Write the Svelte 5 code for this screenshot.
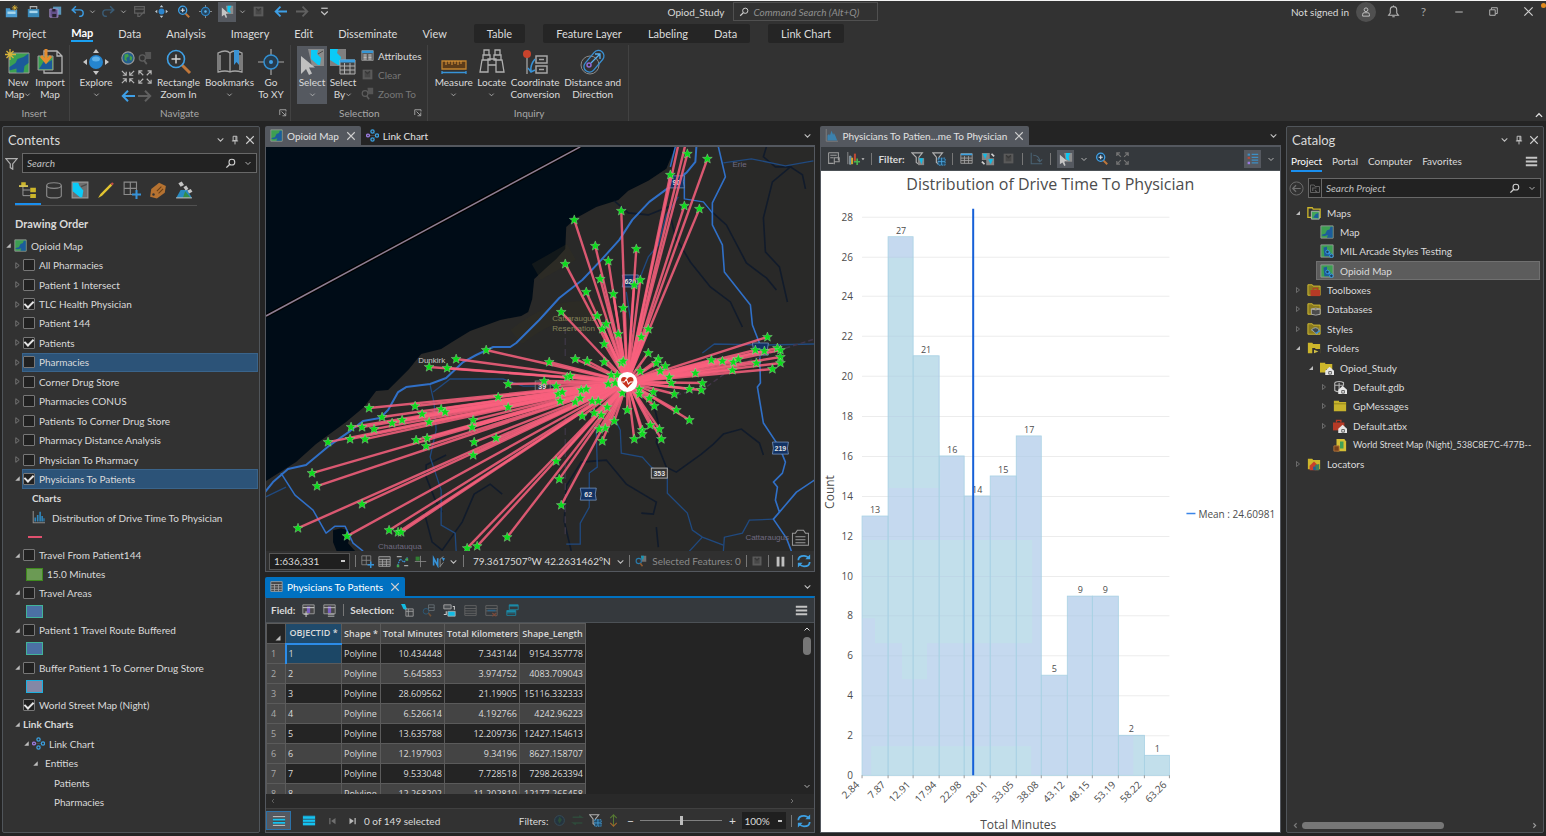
<script lang="ts">
	const icons: Record<string, string> = {
		chev: '<path d="M3 6l5 5 5-5" fill="none" stroke="#c0c0c0" stroke-width="1.800"/>',
		up: '<path d="M3 11l5-5 5 5" fill="none" stroke="#e0e0e0" stroke-width="2"/>',
		left: '<path d="M10 4L6 8l4 4" fill="none" stroke="#7c7c7c" stroke-width="2"/>',
		right: '<path d="M6 4l4 4-4 4" fill="none" stroke="#9c9c9c" stroke-width="2"/>',
		caret: '<path d="M4 6h8l-4 5z" fill="#c8c8c8"/>',
		close: '<path d="M2 2l12 12M14 2L2 14" stroke="#cfcfcf" stroke-width="1.700"/>',
		pin: '<path d="M5 2h6v7H5zM3 9.500h10M8 10v5M9.500 2v7" fill="none" stroke="#c8c8c8" stroke-width="1.500"/>',
		search: '<circle cx="10" cy="6" r="4.200" fill="none" stroke="#d0d0d0" stroke-width="1.600"/><path d="M7 9l-5 5" stroke="#d0d0d0" stroke-width="2"/>',
		menu: '<path d="M1 3.500h14M1 8h14M1 12.500h14" stroke="#c4c4c4" stroke-width="2.400"/>',
		funnel: '<path d="M1 2h14L9.500 8.500V15l-3-2V8.500z" fill="none" stroke="#b0b0b0" stroke-width="1.500"/>',
		open: '<path d="M12 4v8H4z" fill="#bdbdbd"/>',
		shut: '<path d="M5 3v10l6-5z" fill="none" stroke="#8a8a8a" stroke-width="1.300"/>',
		map: '<path d="M1 1h14v14H1z" fill="#3d9f52" stroke="#9a9a9a"/><path d="M2 11l4-1 2-4 3-1 1-3h2.500v12.500H8l1-3-4 1-3-.5z" fill="#1c5c9c"/>',
		mapLink: '<path d="M1 1h14v14H1z" fill="#3d9f52" stroke="#9a9a9a"/><path d="M4 4l4-1v5l4 1v5H5z" fill="#1c5c9c"/><path d="M8 8l3 3m1 1l2 2" stroke="#39a0e8" stroke-width="3"/><circle cx="8.500" cy="9" r="2" fill="#1c3e60" stroke="#39a0e8"/><circle cx="13" cy="13.500" r="2" fill="#1c3e60" stroke="#39a0e8"/>',
		link: '<path d="M3 8h10M8 3l5 5-5 5" stroke="#4b4b4b" fill="none"/><g fill="#303030" stroke="#3aa0e0" stroke-width="1.600"><circle cx="8" cy="3" r="2"/><circle cx="13.500" cy="8" r="2"/><circle cx="8" cy="13" r="2"/><circle cx="2.500" cy="8" r="1.800" stroke="#9a7be0"/></g>',
		bars: '<path d="M1.500 0v14.500H16" fill="none" stroke="#8b8b8b" stroke-width="1.300"/><path d="M3 13V8h2v5zM6 13V5h2v8zM9 13V1h2v12zM11.500 13V6h2v7zM14 13V9h1.500v4z" fill="#2f85ba"/>',
		hist: '<path d="M1.500 0v15H16" fill="none" stroke="#858585"/><path d="M3 14V8l2-2 1 2 2-6 2 5 1-2 2 4 2 5z" fill="#3b81ad"/>',
		newProj: '<path d="M1 4h5l1 2h8v9H1z" fill="#4a9bd0"/><path d="M3 8h10v3H3z" fill="#a9d7ed"/><path d="M12 0v7M8.500 3.500h7M9.500 1l5 5M14.500 1l-5 5" stroke="#e0b83a"/>',
		openProj: '<path d="M1 5h14v10H1z" fill="#3989b8"/><path d="M4 5V2h8v3" fill="none" stroke="#b4b4b4" stroke-width="1.300"/><path d="M3 7h10v3H3z" fill="#a9d7ed"/>',
		saveProj: '<path d="M5 2h10v10H5z" fill="#5a97bb"/><path d="M1 5h10v10H1z" fill="#635089" stroke="#ab94cf"/><path d="M4 5h4v3H4zM4 11h5v4H4z" fill="#282331"/>',
		undo: '<path d="M2 6h9q4 0 4 4t-5 4M6 1.500L1.500 6 6 10" fill="none" stroke="#3c9be0" stroke-width="1.800"/>',
		redo: '<path d="M14 6H5q-4 0-4 4t5 4M10 1.500L14.500 6 10 10" fill="none" stroke="#3a5b74" stroke-width="1.800"/>',
		editDim: '<path d="M2 2h12v8H2zM2 5h12M6 10v4h3M9 13l5-5" fill="none" stroke="#606060" stroke-width="1.500"/>',
		explore: '<circle cx="8" cy="8" r="3.600" fill="#2c86cf"/><path d="M8 0l2.200 2.800H5.800zM8 16l2.200-2.800H5.800zM0 8l2.800-2.200v4.400zM16 8l-2.800-2.200v4.400z" fill="#b9c6cf"/>',
		zoomIn: '<path d="M10 10l5 5" stroke="#c0773a" stroke-width="2.400"/><circle cx="7" cy="6.500" r="5" fill="#203a50" stroke="#3fa0e5" stroke-width="1.600"/><path d="M4.500 6.500h5M7 4v5" stroke="#e0e0e0" stroke-width="1.400"/>',
		xy: '<path d="M8 0v16M0 8h16" stroke="#a0a0a0"/><circle cx="8" cy="8" r="5" fill="#27455e" stroke="#2f86c5" stroke-width="1.500"/><circle cx="8" cy="8" r="1.500" fill="#5db6f0"/>',
		select: '<path d="M6 1h9v10H8z" fill="#8d8d8d"/><path d="M8 1h5l-2 4 1 5-4-2z" fill="#0bc8f4"/><path d="M1 3v11l3-2 2 4 1.500-1L6 11l3-1z" fill="#c4c4c4"/>',
		clear: '<path d="M2 2h12v12H2z" fill="#5a5a5a"/><path d="M4.500 4.500h7v7h-7z" fill="#474747"/><path d="M5 4l3 3 3-3" fill="none" stroke="#383838" stroke-width="1.500"/>',
		back: '<path d="M16 8H2M8 2L2 8l6 6" fill="none" stroke="#3e9fe6" stroke-width="2.200"/>',
		fwd: '<path d="M0 8h14M8 2l6 6-6 6" fill="none" stroke="#606060" stroke-width="2.200"/>',
		more: '<path d="M4 4h8" stroke="#c8c8c8" stroke-width="1.500"/><path d="M4 8l4 4 4-4" fill="none" stroke="#c8c8c8" stroke-width="1.500"/>',
		bell: '<path d="M2 12.500h12l-2-2.500V6q0-4-4-4T4 6v4zM6.500 14.500h3M8 .5V2" fill="none" stroke="#b8b8b8" stroke-width="1.300"/>',
		user: '<circle cx="8" cy="5" r="2.500" fill="none" stroke="#c0c0c0" stroke-width="1.300"/><path d="M3.500 13.500V11q0-2 2-2h5q2 0 2 2v2.500z" fill="none" stroke="#c0c0c0" stroke-width="1.300"/>',
		min: '<path d="M3 8h10" stroke="#c0c0c0" stroke-width="1.300"/>',
		restore: '<path d="M2.500 5.500h8v8h-8zM5 5V2.500h8.500V11H11" fill="none" stroke="#c0c0c0" stroke-width="1.300"/>',
		globe: '<circle cx="8" cy="8" r="7" fill="#235e8d" stroke="#9b9b9b" stroke-width="1.300"/><path d="M4 4l4-1 1 3-3 2 1 4-3-2zM10 5l3 2-1 4-2-1z" fill="#43a047"/>',
		zoomSel: '<path d="M8 1h7v8H9z" fill="#555"/><circle cx="5" cy="8" r="3.500" fill="none" stroke="#5d5d5d" stroke-width="1.500"/><path d="M7 11l3 4" stroke="#5d5d5d" stroke-width="2"/>',
		zoomSelB: '<path d="M8 1h7v8H9z" fill="#717171"/><path d="M8 1h4l-1 5H9z" fill="#1397b6"/><circle cx="5" cy="8" r="3.500" fill="none" stroke="#297aab" stroke-width="1.500"/><path d="M7 11l3 4" stroke="#8d5a30" stroke-width="2"/>',
		inArrows: '<path d="M1 1l5 5M6 2v4H2M15 1l-5 5M10 2v4h4M1 15l5-5M2 10h4v4M15 15l-5-5M14 10h-4v4" fill="none" stroke="#b5b5b5" stroke-width="1.300"/>',
		outArrows: '<path d="M6 6L1 1M1 5V1h4M10 6l5-5M11 1h4v4M6 10l-5 5M1 11v4h4M10 10l5 5M11 15h4v-4" fill="none" stroke="#b5b5b5" stroke-width="1.300"/>',
		full: '<path d="M6 6L1 1M1 5V1h4M10 6l5-5M11 1h4v4M6 10l-5 5M1 11v4h4M10 10l5 5M11 15h4v-4" fill="none" stroke="#747474" stroke-width="1.500"/>',
		attrs: '<path d="M1 2h14v12H1z" fill="#5a5a5a" stroke="#9b9b9b"/><path d="M1 2h14v3H1z" fill="#3596d5"/><path d="M3 7.500h4M3 10h4M9 7.500h4M9 10h4M3 12.300h4M9 12.300h4" stroke="#d6d6d6" stroke-width="1.300"/>',
		launch: '<path d="M1.500 12V1.500H14V5M5 5l8 8M13.500 7v6.500H7" fill="none" stroke="#b0b0b0" stroke-width="1.700"/>',
		order: '<path d="M3.500 5v8H10M3.500 8H10" stroke="#a0a0a0" fill="none" stroke-width=".8"/><path d="M2 1h4v3H2zM10 6h5v4h-5zM10 11.500h5V15h-5z" fill="#cdb62b"/><path d="M0 4.500h8" stroke="#f0dc5a" stroke-width="1.400"/>',
		source: '<path d="M1.500 4v9q0 2 6.500 2t6.500-2V4" fill="none" stroke="#8a8a8a"/><ellipse cx="8" cy="4" rx="6.500" ry="2.500" fill="none" stroke="#8a8a8a"/>',
		layer: '<path d="M1 1h14v14H1z" fill="#6f6f6f" stroke="#9a9a9a"/><path d="M1.500 1.500h5l1 3 3.500 4-1 6H8L1.500 9z" fill="#0bcaf7"/><path d="M9 5l5-2" stroke="#4a4a4a"/>',
		pencil: '<path d="M1 15l2-3.500L12 2.500l1.500 1.500-9 9z" fill="#e3c531"/><path d="M12 2.500l1.500-1.500L15 2.500 13.500 4z" fill="#c25048"/>',
		grid: '<path d="M1 1h11v11H1zM6.500 1v11M1 6.500h11" fill="none" stroke="#8b8b8b"/><path d="M12 8v8M8 12h8" stroke="#3793d8" stroke-width="1.800"/>',
		tag: '<path d="M1 14l1-7 7-5.500 6 3-1 6-7 5z" fill="#b57231"/><circle cx="4" cy="12" r="1.100" fill="#333"/><path d="M7 9l4-4M8.500 11l4-4" stroke="#6b4015"/>',
		imagery: '<path d="M1 15l4-7h6l4 7z" fill="#278ac0"/><path d="M7 15l2-6 5 6z" fill="#348f48"/><path d="M3 2l3-1.500 2 3-3 1.500zM7.500 5.500l2.500-1.500 2 3-2.500 1.500zM11 8.500l3-1.500 1.500 2.500-3 1.500z" fill="#c4c4c4"/><path d="M1 15h14" stroke="#b8b8b8"/>',
		table: '<path d="M1 2h14v12H1z" fill="#444" stroke="#a5a5a5"/><path d="M1 5.500h14M1 8.500h14M1 11.500h14M5.500 5v9M10.500 5v9" stroke="#a5a5a5"/>',
		tableBlue: '<path d="M1 2h14v12H1z" fill="#444" stroke="#a5a5a5"/><path d="M1 3h14" stroke="#3aa0e0" stroke-width="2"/><path d="M1 7.500h14M1 10.500h14M5.500 5v9M10.500 5v9" stroke="#a5a5a5"/>',
		tableDim: '<path d="M1 2h14v12H1zM1 5.500h14M1 8.500h14M1 11.500h14" fill="none" stroke="#696969"/>',
		tableRed: '<path d="M1 2h14v12H1zM1 5.500h14M1 8.500h14" fill="none" stroke="#696969"/><path d="M9 11l5 4M14 11l-5 4" stroke="#7b4a3a" stroke-width="1.500"/><path d="M3 8h10" stroke="#2b6284" stroke-width="2"/>',
		fieldAdd: '<path d="M1 1h14v11H1z" fill="#494949" stroke="#a5a5a5"/><path d="M6 3h4v8H6z" fill="#7b5fc4"/><path d="M1 4.500h14M5 9v7M2 12.500h6" stroke="#cfcfcf" stroke-width="1.200"/>',
		fieldCalc: '<path d="M1 1h14v11H1z" fill="#494949" stroke="#a5a5a5"/><path d="M6 3h4v8H6z" fill="#7b5fc4"/><path d="M1 4.500h14M6 12.500h8M6 15h8" stroke="#cfcfcf"/>',
		selAttr: '<path d="M0 0h5l3 8-5-2z" fill="#12bce4"/><path d="M6 6h9v9H6zM6 9h9M9 6v9" fill="#3d4043" stroke="#a5a5a5"/>',
		selZoom: '<path d="M8 1h7v7H8zM8 4.500h7" fill="none" stroke="#697176"/><circle cx="5" cy="9" r="3.500" fill="none" stroke="#2b5f80"/><path d="M8 11l3 4" stroke="#725036" stroke-width="2"/>',
		swap: '<path d="M1 1h9v5H1z" fill="#4b4f53" stroke="#b0b0b0"/><path d="M6 9h9v6H6z" fill="#12bce4" stroke="#b0b0b0"/><path d="M12 3h2v4M4 9v4H1" fill="none" stroke="#c8c8c8" stroke-width="1.300"/>',
		stack: '<path d="M4 1h11v6H4z" fill="none" stroke="#1b8aa8"/><path d="M1 8h11v6H1zM1 11h11" fill="none" stroke="#1b8aa8"/><path d="M4 2h11M1 9h11" stroke="#1b8aa8" stroke-width="2"/>',
		allRows: '<path d="M1 2h14v12H1z" fill="#44494d"/><path d="M1 3h14M1 13h14" stroke="#b8b8b8" stroke-width="1.500"/><path d="M1 6.500h14M1 10h14" stroke="#15c2f0" stroke-width="2"/>',
		selRows: '<path d="M1 2h14v11H1z" fill="#15c2f0"/><path d="M1 2h14M1 6h14M1 9.500h14" stroke="#2a566c"/>',
		first: '<path d="M3 3v10" stroke="#6f6f6f" stroke-width="2"/><path d="M12 3v10L5 8z" fill="#6f6f6f"/>',
		last: '<path d="M13 3v10" stroke="#b9b9b9" stroke-width="2"/><path d="M4 3v10l7-5z" fill="#b9b9b9"/>',
		globeDim: '<circle cx="8" cy="8" r="6" fill="#24333e" stroke="#37505f"/><path d="M8 3l3 4-3 5-2-4z" fill="#2c4c38"/>',
		swapDim: '<path d="M2 4h11l-3-2M14 11H3l3 2" fill="none" stroke="#2f4a3b" stroke-width="2"/>',
		funnelGrid: '<path d="M1 1h11L8 6v8l-3-2V6z" fill="none" stroke="#b0b0b0" stroke-width="1.300"/><path d="M7 7h8v8H7z" fill="#1f4967" stroke="#4aa3dc" stroke-dasharray="2 1"/><path d="M11 7v8M7 11h8" stroke="#4aa3dc"/>',
		funnelSel: '<path d="M1 1h12L9 6v8l-3-2V6z" fill="none" stroke="#b0b0b0" stroke-width="1.300"/><path d="M8 7h7v8H8z" fill="#888"/><path d="M9 7h5l-2 7z" fill="#13b9e2"/>',
		sortV: '<path d="M8 1v14M4 5l4-4 4 4" fill="none" stroke="#567a33" stroke-width="1.300"/><path d="M4 11l4 4 4-4" fill="none" stroke="#a5662b" stroke-width="1.300"/>',
		refresh: '<path d="M1.500 7q0-5 6.500-5 3.500 0 5.500 3M14.500 9q0 5-6.500 5-3.500 0-5.500-3" fill="none" stroke="#3d9fe2" stroke-width="2"/><path d="M15 .5V6H9.500zM1 15.500V10h5.500z" fill="#3d9fe2"/>',
		pause: '<path d="M5 2v12M11 2v12" stroke="#c0c0c0" stroke-width="3.500"/>',
		sketch: '<path d="M2 13l3-8 5 4 4-6" fill="none" stroke="#3793d8" stroke-dasharray="2 1" stroke-width="1.400"/><path d="M1 2h6M10 13h5" stroke="#a5a5a5" stroke-width="1.500"/><path d="M1 12h3v3H1zM12 4h3v3h-3z" fill="#46a550"/>',
		cross: '<path d="M8 1v14M1 8h14" stroke="#8a8a8a"/><path d="M2 2h5v5H2z" fill="#317d32"/>',
		north: '<path d="M2 13V4l5 9V4" fill="none" stroke="#3793d8" stroke-width="2"/><path d="M10 15V5l4-3M10 14l4-5" fill="none" stroke="#9d9d9d"/><path d="M12 3l4 1-2 4z" fill="#3793d8"/>',
		props: '<path d="M2 1h12v9M2 1v13h6M4 4h8M4 7h4M9 15V7h6v5H9" fill="none" stroke="#9e9e9e" stroke-width="1.300"/>',
		chartAdd: '<path d="M1 0v15M3 15V5h2v10z" stroke="#9b9b9b" fill="#2f85ba"/><path d="M5 7h2.500v8H5z" fill="#d2a62f"/><path d="M8.500 2H11v9H8.500z" fill="#c24b35"/><path d="M12.500 8v8M8.500 12h8" stroke="#49b34f" stroke-width="2"/>',
		swapSel: '<path d="M1 1h9v8H1zM6 7h9v8H6z" fill="#858585"/><path d="M2 2h5l-2 6zM8 8h6l-3 6z" fill="#13b9e2"/><path d="M12 2l3 3M1 11l3 3" stroke="#d0d0d0" stroke-width="2"/>',
		axis: '<path d="M1.500 1v13.500H15M4 4q7 0 8 7M9 9l3 3 3-3" fill="none" stroke="#4a6374" stroke-width="1.300"/>',
		legend: '<path d="M7 3h8M7 6.500h8M7 10h8M7 13.500h8" stroke="#3d8fc4" stroke-width="1.500"/><path d="M2 2h3v2.500H2z" fill="#3d8fc4"/><path d="M2 6h3v2.500H2z" fill="#b5483a"/><path d="M2 12h3v3H2z" fill="#9a7be0"/>',
		backCircle: '<circle cx="8" cy="8" r="7" fill="none" stroke="#707070"/><path d="M12.500 8H4M7.500 4.500L4 8l3.500 3.500" fill="none" stroke="#707070" stroke-width="1.300"/>',
		folderUp: '<path d="M2 4h5l1 2h6v8H2z" fill="none" stroke="#636363" stroke-width="1.300"/><path d="M5 12V8h5M8 11l3 3" stroke="#636363" fill="none" stroke-width="1.500"/>',
		fMaps: '<path d="M1 13V2h5l1 1.500h8V13z" fill="none" stroke="#cdb62b" stroke-width="1.500"/><path d="M5 6h9v9H5z" fill="#43a55a" stroke="#b8b8b8"/><path d="M7 13l3-4 3-1v6z" fill="#1c5c9c"/>',
		fTool: '<path d="M1 14V2h5l1 1.500h8V14z" fill="#8a7a1e" stroke="#d8c233"/><path d="M4 8h11v7H4z" fill="#b63a26"/><path d="M7 8V6h5v2" fill="none" stroke="#b63a26" stroke-width="1.300"/>',
		fDb: '<path d="M1 14V2h5l1 1.500h8V14z" fill="#8a7a1e" stroke="#d8c233"/><path d="M5 8v6q5 2 10 0V8q-5 2-10 0q5-2 10 0" fill="#4c4c4c" stroke="#b0b0b0"/>',
		fStyle: '<path d="M1 14V2h5l1 1.500h8V14z" fill="#8a7a1e" stroke="#d8c233"/><path d="M5 9q5-5 9 0l-3 5-3-3z" fill="#3d4a52" stroke="#a9b3b9"/><path d="M10 13l5-3" stroke="#3793d8" stroke-width="1.500"/>',
		fFolder: '<path d="M1 14V2h5l1 1.500h8V14z" fill="#cdb62b"/><path d="M6 15V8h3l1 1h5v6z" fill="#323232"/><path d="M8 10v4l5-2z" fill="#d0c04a"/>',
		folder: '<path d="M1 14V2h6v1.500h8V14z" fill="#c7b32c"/><path d="M1 5.500h14" stroke="#8f811c"/>',
		home: '<path d="M0 13V2h6v1.500h8V9H7v4z" fill="#cdb62b"/><path d="M6 11l5-4.500 5 4.500v5H6z" fill="#e6e6e6"/><path d="M10 15v-3h3v3z" fill="none" stroke="#555"/>',
		gdb: '<path d="M2 3v9q3 2 5 1V3M2 3q5-2.500 10 0v3H2" fill="none" stroke="#b5b5b5" stroke-width="1.300"/><path d="M6 11l5-4.500 5 4.500v5H6z" fill="#e6e6e6"/><path d="M10 15v-3h3v3z" fill="none" stroke="#555"/>',
		atbx: '<path d="M0 4h13v9H0z" fill="#b63a26"/><path d="M4 4V1.500h5V4" fill="none" stroke="#b63a26" stroke-width="1.500"/><path d="M6 11l5-4.500 5 4.500v5H6z" fill="#e6e6e6"/><path d="M10 15v-3h3v3z" fill="none" stroke="#555"/>',
		doc: '<path d="M4 1h9l2 3v11H4z" fill="#d5bf35"/><path d="M8 4h4v8H8z" fill="#3f9f58"/><path d="M1 9h6v6H1z" fill="#77401c" stroke="#b5743a"/>',
		fLoc: '<path d="M1 14V2h5l1 1.500h8V14z" fill="#cdb62b"/><path d="M3 10l5-5 5 5v5H3z" fill="#c8402c"/><path d="M9 9l5-1v7H9z" fill="#3b8060"/><path d="M7 15v-4h3v4" fill="#245f92"/>'
	};

	// ribbon icons, drawn on a 26 unit grid
	const big: Record<string, string> = {
		newMap: '<path d="M4 4h20v20H4z" fill="#3aa052" stroke="#9b9b9b"/><path d="M4.500 18l6-4 2-4 6-2 5-3.500V14l-4 3-1 6.500h-7v-4l-7 2z" fill="#1b5a9a"/><path d="M5 0v11M0 5.500h11M1.500 2l7 7M8.500 2l-7 7" stroke="#d8b43a" stroke-width="1.300"/>',
		importMap: '<path d="M7 2h13l5 5v17H7zM20 2v5h5" fill="none" stroke="#b4b4b4" stroke-width="1.300"/><path d="M1 7h15v14H1z" fill="#3aa052" stroke="#9b9b9b"/><path d="M2 20l5-8 3 2 5-3v9z" fill="#1b5a9a"/><path d="M9 0v12M4 7l5 6 5-6" fill="none" stroke="#e58c2e" stroke-width="3"/>',
		explore: '<circle cx="13" cy="13" r="7" fill="#2585cf"/><ellipse cx="13" cy="10" rx="4" ry="2.500" fill="#5eb0e8"/><path d="M13 0l3 4h-6zM13 26l3-4h-6zM0 13l4-3v6zM26 13l-4-3v6z" fill="#c6c6c6"/>',
		zoomIn: '<path d="M16 16l8 8" stroke="#c0773a" stroke-width="3"/><circle cx="10" cy="10" r="8.500" fill="none" stroke="#3fa0e5" stroke-width="1.600"/><path d="M5.500 10h9M10 5.500v9" stroke="#d8d8d8" stroke-width="1.400"/>',
		book: '<path d="M1 23V4q8-4 12 0 4-4 12 0v19q-8-2-12 0-4-2-12 0zM13 4v19M3 21V6M23 21V6" fill="none" stroke="#a5a5a5" stroke-width="1.300"/><path d="M17 1h5v15l-2.500-3-2.500 3z" fill="#3b93d4"/>',
		xy: '<path d="M13 0v26M0 13h26" stroke="#a5a5a5" stroke-width="1.200"/><circle cx="13" cy="13" r="7" fill="#263c4e" stroke="#3390d2" stroke-width="1.500"/><circle cx="13" cy="13" r="2" fill="#3fa0e5"/>',
		select: '<path d="M9 0h16v17H13z" fill="#8b8b8b"/><path d="M12 1h7l-1 4 4 4-1 7h-2l-7-6z" fill="#0bcaf7"/><path d="M19 5l5-3" stroke="#4a4a4a"/><path d="M2 7v18l5-5 3 6 3-1.500-3-6h6z" fill="#c0c0c0"/>',
		selectBy: '<path d="M0 0h16v17H0z" fill="#808080"/><path d="M0 0h8l-1 4 4 4-1 8H8L0 11z" fill="#0bcaf7"/><path d="M10 11h15v14H10z" fill="#444" stroke="#b0b0b0"/><path d="M10 12h15" stroke="#3aa0e0" stroke-width="3"/><path d="M10 17h15M10 21h15M14.500 14v11M20 14v11" stroke="#b0b0b0"/>',
		measure: '<path d="M1 12h24v8H1z" fill="#5c3c1a" stroke="#c0822f" stroke-width="1.300"/><path d="M5 12v4M8 12v3M11 12v4M14 12v3M17 12v4M20 12v3" stroke="#e0983a"/><path d="M1 23.500h24M1 22v3M25 22v3" stroke="#3793d8" stroke-width="1.300"/>',
		locate: '<path d="M5 1h5v5H5zM16 1h5v5h-5zM4 6h7v5H4zM15 6h7v5h-7zM3 11l-2 12h8V11zM17 11v12h8l-2-12zM9 10h8v6H9z" fill="none" stroke="#b0b0b0" stroke-width="1.300"/>',
		coord: '<path d="M5 5v20" stroke="#a5a5a5" stroke-width="1.300"/><circle cx="5" cy="5" r="4" fill="#c9432c"/><path d="M14 7h11v7H14zM14 17h11v7H14zM17 10.500h5M17 20.500h5" fill="none" stroke="#a5a5a5" stroke-width="1.500"/><path d="M13 10q-5 6-4 12M6 19l3 4 4-2" fill="none" stroke="#3793d8" stroke-width="1.500"/>',
		distance: '<circle cx="10" cy="16" r="9" fill="none" stroke="#8a8a8a"/><rect x="2" y="7" width="25" height="11" rx="5.500" transform="rotate(-50 14 13)" fill="none" stroke="#3a8fd0" stroke-width="1.300"/><circle cx="9" cy="16" r="2" fill="none" stroke="#8d6cd8" stroke-width="1.500"/><path d="M11 14l9-9M15 5h5v5" fill="none" stroke="#57b0ee" stroke-width="1.300"/>'
	};

	const quick = ['newProj', 'openProj', 'saveProj', 'undo', '-', 'redo', '-', 'editDim', 'explore', 'zoomIn', 'xy', '*select', '-', 'clear', 'back', 'fwd', 'more'];
	const tabs = ['Project', 'Map', 'Data', 'Analysis', 'Imagery', 'Edit', 'Disseminate', 'View'];
	const contextTabs = [['Table'], ['Feature Layer', 'Labeling', 'Data'], ['Link Chart']];

	let layers = $state([
		{ pad: 0, open: true, icon: 'map', label: 'Opioid Map' },
		...['All Pharmacies', 'Patient 1 Intersect', 'TLC Health Physician', 'Patient 144', 'Patients', 'Pharmacies', 'Corner Drug Store', 'Pharmacies CONUS', 'Patients To Corner Drug Store', 'Pharmacy Distance Analysis', 'Physician To Pharmacy'].map((label) => ({
			pad: 9, open: false, label,
			checked: label === 'TLC Health Physician' || label === 'Patients',
			selected: label === 'Pharmacies'
		})),
		{ pad: 9, open: true, checked: true, selected: true, label: 'Physicians To Patients' },
		{ pad: 18, bold: true, label: 'Charts' },
		{ pad: 18, icon: 'bars', wide: true, label: 'Distribution of Drive Time To Physician' },
		{ pad: 14, legend: 'line' },
		{ pad: 9, open: true, checked: false, label: 'Travel From Patient144' },
		{ pad: 12, legend: 'green', label: '15.0 Minutes' },
		{ pad: 9, open: true, checked: false, label: 'Travel Areas' },
		{ pad: 12, legend: 'blue' },
		{ pad: 9, open: true, checked: false, label: 'Patient 1 Travel Route Buffered' },
		{ pad: 12, legend: 'blue' },
		{ pad: 9, open: true, checked: false, label: 'Buffer Patient 1 To Corner Drug Store' },
		{ pad: 12, legend: 'grey' },
		{ pad: 9, checked: true, label: 'World Street Map (Night)' },
		{ pad: 9, open: true, bold: true, label: 'Link Charts' },
		{ pad: 18, open: true, icon: 'link', label: 'Link Chart' },
		{ pad: 27, open: true, deep: true, label: 'Entities' },
		{ pad: 40, label: 'Patients' },
		{ pad: 40, label: 'Pharmacies' }
	] as any[]);

	const catalog = [
		{ pad: 6, open: true, icon: 'fMaps', label: 'Maps' },
		{ pad: 19, icon: 'map', label: 'Map' },
		{ pad: 19, icon: 'mapLink', label: 'MIL Arcade Styles Testing' },
		{ pad: 19, icon: 'mapLink', label: 'Opioid Map', selected: true },
		{ pad: 6, open: false, icon: 'fTool', label: 'Toolboxes' },
		{ pad: 6, open: false, icon: 'fDb', label: 'Databases' },
		{ pad: 6, open: false, icon: 'fStyle', label: 'Styles' },
		{ pad: 6, open: true, icon: 'fFolder', label: 'Folders' },
		{ pad: 19, open: true, icon: 'home', label: 'Opiod_Study' },
		{ pad: 32, open: false, icon: 'gdb', label: 'Default.gdb' },
		{ pad: 32, open: false, icon: 'folder', label: 'GpMessages' },
		{ pad: 32, open: false, icon: 'atbx', label: 'Default.atbx' },
		{ pad: 32, icon: 'doc', label: 'World Street Map (Night)_538C8E7C-477B--', long: true },
		{ pad: 6, open: false, icon: 'fLoc', label: 'Locators' }
	] as any[];

	const rows = [
		['10.434448', '7.343144', '9154.357778'],
		['5.645853', '3.974752', '4083.709043'],
		['28.609562', '21.19905', '15116.332333'],
		['6.526614', '4.192766', '4242.96223'],
		['13.635788', '12.209736', '12427.154613'],
		['12.197903', '9.34196', '8627.158707'],
		['9.533048', '7.728518', '7298.263394'],
		['12.268202', '11.202819', '12177.265458']
	];

	// patient locations on the map canvas
	const hub = [361, 235];
	const patients = [[421,7],[441,12],[404,28],[418,59],[433,62],[355,64],[308,73],[329,99],[370,102],[299,117],[342,114],[334,132],[374,133],[368,138],[320,145],[347,147],[357,161],[295,165],[331,169],[340,177],[336,182],[352,187],[382,182],[375,190],[338,197],[382,206],[501,190],[511,201],[514,203],[489,203],[498,204],
		[283,215],[309,212],[321,214],[338,215],[355,216],[357,214],[392,212],[390,216],[399,219],[394,224],[403,230],[405,236],[408,247],[429,226],[445,213],[456,214],[467,215],[472,212],[490,216],[514,210],[514,216],[506,222],[466,223],[436,236],[435,243],[423,242],[374,224],[373,242],[373,247],[387,245],[383,251],[388,259],[410,263],[423,273],[384,278],[393,282],[376,283],[376,287],[368,292],[395,292],[361,263],[348,274],[339,281],[333,282],[336,294],[335,268],[328,266],[341,260],[316,269],[326,254],[332,254],[309,255],[314,251],[294,254],[292,247],[296,245],[290,239],[278,234],[301,230],[304,229],[315,243],[320,242],[345,228],[351,228],[342,237],[349,236],[356,246],[290,314],[293,332],[295,358],
		[220,203],[190,212],[163,220],[181,221],[242,237],[232,250],[242,260],[149,259],[156,267],[175,262],[179,265],[103,261],[116,270],[126,276],[136,273],[163,275],[85,280],[96,280],[108,282],[84,292],[99,292],[62,295],[150,293],[161,291],[160,299],[207,273],[206,280],[208,295],[230,291],[207,308],[46,326],[51,339],[96,357],[32,381],[81,389],[123,383],[132,385],[135,385],[201,401],[211,399],[241,390]];
	const offMap = [[412, -2], [419, -2]];
	const shields = [{ x: 410, y: 35, t: '90' }, { x: 364, y: 134, t: '620' }, { x: 514, y: 301, t: '219' }, { x: 322, y: 347, t: '62' }, { x: 494, y: 202, t: '' }];

	// histogram
	const counts = [13, 27, 21, 16, 14, 15, 17, 5, 9, 9, 2, 1];
	const edges = ['2.84', '7.87', '12.91', '17.94', '22.98', '28.01', '33.05', '38.08', '43.12', '48.15', '53.19', '58.22', '63.26'];
	const ticks = Array.from({ length: 15 }, (_, i) => i * 2);
	const bx = (i: number) => Math.round(41 + i * 25.6);
	const by = (n: number) => Math.round(603 - n * 19.94);

	let zoom = $state(50);
</script>

{#snippet icon(name, size = 14)}
	<svg class="icon" width={size} height={size} viewBox="0 0 16 16" aria-hidden="true">{@html icons[name]}</svg>
{/snippet}

{#snippet large(name, lines, cls = '', drop = false)}
	<button class="large {cls}">
		<svg width="26" height="26" viewBox="0 0 26 26" aria-hidden="true">{@html big[name]}</svg>
		<span>{lines[0]}</span>
		<span class="second">{lines[1] ?? ''}{#if drop}{@render icon('chev', 7)}{/if}</span>
	</button>
{/snippet}

{#snippet paneTitle(title)}
	<header class="pane-title">
		<h2>{title}</h2>
		<button aria-label="Options">{@render icon('chev', 9)}</button>
		<button aria-label="Pin">{@render icon('pin', 10)}</button>
		<button aria-label="Close">{@render icon('close', 10)}</button>
	</header>
{/snippet}

<div class="app">
	<div class="titlebar">
		<div class="quick">
			{#each quick as q}
				{#if q === '-'}
					<button class="drop" aria-label="More">{@render icon('chev', 7)}</button>
				{:else}
					<button class:on={q[0] === '*'} aria-label={q.replace('*', '')}>{@render icon(q.replace('*', ''), 13)}</button>
				{/if}
			{/each}
		</div>
		<span class="project">Opiod_Study</span>
		<label class="command">
			{@render icon('search', 10)}
			<input type="text" placeholder="Command Search (Alt+Q)" aria-label="Command Search">
		</label>
		<div class="account">
			<span>Not signed in</span>
			<button class="avatar" aria-label="Account">{@render icon('user', 12)}</button>
			<button aria-label="Notifications">{@render icon('bell', 13)}</button>
			<button class="help">?</button>
			<button aria-label="Minimize">{@render icon('min', 12)}</button>
			<button aria-label="Restore">{@render icon('restore', 11)}</button>
			<button aria-label="Close">{@render icon('close', 11)}<i class="dot"></i></button>
		</div>
	</div>

	<nav class="tabs">
		{#each tabs as tab}
			<button class:active={tab === 'Map'}><span>{tab}</span></button>
		{/each}
		{#each contextTabs as group}
			<div class="context">
				{#each group as tab}
					<button>{tab}</button>
				{/each}
			</div>
		{/each}
	</nav>

	<div class="ribbon">
		<section>
			<div class="tools">
				{@render large('newMap', ['New', 'Map'], 'w32', true)}
				{@render large('importMap', ['Import', 'Map'], 'w32')}
			</div>
			<footer>Insert</footer>
		</section>
		<section>
			<div class="tools">
				{@render large('explore', ['Explore'], 'w44', true)}
				<div class="mini">
					{#each ['globe', 'zoomSel', 'inArrows', 'outArrows', 'back', 'fwd'] as m}
						<button aria-label={m}>{@render icon(m, 14)}</button>
					{/each}
				</div>
				{@render large('zoomIn', ['Rectangle', 'Zoom In'], 'w50')}
				{@render large('book', ['Bookmarks'], 'w50', true)}
				{@render large('xy', ['Go', 'To XY'], 'w32')}
			</div>
			<footer>Navigate <button aria-label="Navigation options">{@render icon('launch', 8)}</button></footer>
		</section>
		<section>
			<div class="tools">
				{@render large('select', ['Select'], 'w30 on', true)}
				{@render large('selectBy', ['Select', 'By'], 'w32', true)}
				<div class="stack">
					<button>{@render icon('attrs', 13)} Attributes</button>
					<button disabled>{@render icon('clear', 13)} Clear</button>
					<button disabled>{@render icon('zoomSel', 13)} Zoom To</button>
				</div>
			</div>
			<footer>Selection <button aria-label="Selection options">{@render icon('launch', 8)}</button></footer>
		</section>
		<section>
			<div class="tools">
				{@render large('measure', ['Measure'], 'w40', true)}
				{@render large('locate', ['Locate'], 'w36', true)}
				{@render large('coord', ['Coordinate', 'Conversion'], 'w50')}
				{@render large('distance', ['Distance and', 'Direction'], 'w64')}
			</div>
			<footer>Inquiry</footer>
		</section>
		<button class="collapse" aria-label="Collapse ribbon">{@render icon('up', 10)}</button>
	</div>

	<main>
		<aside class="pane contents">
			{@render paneTitle('Contents')}
			<div class="search-row">
				{@render icon('funnel', 13)}
				<label class="search">
					<input type="text" placeholder="Search" aria-label="Search contents">
					{@render icon('search', 11)}
					{@render icon('chev', 8)}
				</label>
			</div>
			<div class="views">
				{#each ['order', 'source', 'layer', 'pencil', 'grid', 'tag', 'imagery'] as v}
					<button class:active={v === 'order'} aria-label="List by {v}">{@render icon(v, 18)}</button>
				{/each}
			</div>
			<h3>Drawing Order</h3>
			<ul class="tree">
				{#each layers as l}
					<li class:legend={l.legend} style="padding-left: {l.pad}px">
						<span class="twist">{#if l.open !== undefined}{@render icon(l.open ? 'open' : 'shut', 9)}{/if}</span>
						<label class="item" class:selected={l.selected} class:bold={l.bold} class:wide={l.wide} class:deep={l.deep}>
							{#if l.checked !== undefined}<input type="checkbox" bind:checked={l.checked}>{/if}
							{#if l.icon}{@render icon(l.icon, 13)}{/if}
							{#if l.legend}<i class="swatch {l.legend}"></i>{/if}
							<span>{l.label ?? ''}</span>
						</label>
					</li>
				{/each}
			</ul>
		</aside>

		<div class="center">
			<div class="view map-view">
				<div class="doc-tabs">
					<button class="doc active">{@render icon('map', 13)} <span>Opioid Map</span> {@render icon('close', 10)}</button>
					<button class="doc">{@render icon('link', 13)} Link Chart</button>
					<button class="list" aria-label="Tab list">{@render icon('chev', 9)}</button>
				</div>
				<div class="frame">
					<svg class="map" viewBox="0 0 548 404" preserveAspectRatio="xMidYMid slice" role="img" aria-label="Opioid Map">
						<rect width="548" height="404" fill="#292928"/>
						<path d="M0 0H409L400 22 382 34 362 44 352 53 330 60 310 71 300 80 299 102 290 112 282 119 268 132 266 152 262 165 255 169 234 173 204 184 186 195 175 202 155 207 143 222 122 243 110 244 98 260 80 275 50 297 30 315 0 334Z" fill="#000c17"/>
						<path d="M270 125l35-20M250 190q50-40 90-20" stroke="#33311f" stroke-width="18" opacity=".35" fill="none"/>
						<path d="M0 169L314 0" stroke="#000" stroke-width="4"/>
						<path d="M0 169L314 0" stroke="#8d7d92" stroke-width="1.500"/>
						<path d="M67 383l8-2 10 3-3 12 8 9H71l-4-10z" fill="#000c17"/>
						<g fill="none" stroke="#111b2b" stroke-width="1.600">
							<path d="M348 54l14 12 20 2 20-8 7 30 15 25 20 25 20 15 12 25M440 60l20 18 20 38 20 15 10 12"/>
							<path d="M500 0l-3 10 12 10 15 0-18 15-9 36 2 34 14 15 8 35M524 20l12 8 3 14"/>
							<path d="M305 404l-7-30 2-35 15-24 25-2 20 24 30 18-3 12-12-1M390 380l2 20"/>
							<path d="M388 260l5 20-3 15 10 25 10 5 25-18 12-10 10-10 18-5 18 14 4 12"/>
							<path d="M180 308l-20 10v12l10 25 6 10M158 365l8 30 10 8 20-28 12-28 16-10 12 10"/>
						</g>
						<g fill="none" stroke="#204a80" stroke-width="1.300">
							<path d="M457 16l28-4 34 7 28-5M360 145l6 40M374 130l8-20 10-12 8-30 12-18M436 206l12-9 50 1 50-1"/>
							<path d="M164 238L168 256 170 283 164 310 175 343 175 378 189 386 190 404M167 245L184 232 237 232 257 239 290 239"/>
							<path d="M330 283L331 320 323 326 323 360 314 376 314 397 300 397M350 275L354 283 355 306 376 310 385 320 401 330 401 346 421 366 426 383 436 390 457 398"/>
							<path d="M423 404L436 390M457 404L458 390 476 386 483 373 507 372"/>
							<path d="M-3 351L20 340"/>
						</g>
						<g fill="none" stroke="#3070c8" stroke-width="2" stroke-linejoin="round">
							<path d="M430 0L429 15 420 26 406 38 383 55 366 73 353 93 335 113 316 133 293 151 273 173 250 196 244 200 227 200 210 208 197 215 180 231 164 237 140 240 132 245 122 263 114 271 97 274 84 284 64 298 40 318 22 322 7 335 -1 345"/>
							<path d="M452 0L459 30 446 56 446 78 456 98 458 125 484 158 486 178 493 196 494 236 491 240 497 276 513 300 519 315 516 326 507 335 511 340 509 353 513 365 507 372 520 391 525 404M513 365L530 345 548 333" stroke-width="1.600"/>
							<path d="M409 0L404 20M418 26L418 52 437 55 446 66M15 326L29 348 47 363 60 386 69 379 79 379 87 396 97 404" stroke-width="1.500"/>
						</g>
						<path d="M410 248l30-8 30-22 40-14 38-12" fill="none" stroke="#43364a" stroke-width="1.500" stroke-dasharray="5 3"/>
						<path d="M299 180v30M299 270v120" stroke="#3a3542" stroke-width="1.500" stroke-dasharray="7 4"/>
						<g class="place">
							<text x="466" y="20">Erie</text>
							<text x="479" y="393">Cattaraugus</text>
							<text x="112" y="402">Chautauqua</text>
							<text class="park" x="286" y="174">Cattaraugus</text>
							<text class="park" x="286" y="184">Reservation</text>
							<text class="town" x="152" y="216">Dunkirk</text>
						</g>
						<rect x="269" y="234" width="15" height="10" fill="#30343a" stroke="#777"/>
						<text class="shield" x="276" y="242">39</text>
						{#each shields as s}
							<path d="M{s.x - 8} {s.y - 6}h16l-1 6 1 6h-16l1-6z" fill="#123263" stroke="#7492bd" stroke-width=".8"/>
							<text class="shield" x={s.x} y={s.y + 3}>{s.t}</text>
						{/each}
						<rect x="385" y="321" width="16" height="10" fill="#333" stroke="#aaa"/>
						<text class="shield" x="393" y="329">353</text>
						<g stroke="#f9607e" stroke-width="2.400" stroke-opacity=".85">
							{#each [...offMap, ...patients] as [x, y]}
								<line x1={hub[0]} y1={hub[1]} x2={x} y2={y}/>
							{/each}
						</g>
						{#each patients as [x, y]}
							<path transform="translate({x} {y})" d="M0-5L1.300-1.600 4.900-1.500 2.100.7 3 4.200 0 2.200-3 4.200-2.100.7-4.900-1.500-1.300-1.600z" fill="#0bdc1c" stroke="#a9d7a5" stroke-width=".4"/>
						{/each}
						<circle cx="361" cy="235" r="10" fill="#fff"/>
						<path d="M361 241l-6-6q-1-5 3-5 2 0 3 2 1-2 3-2 4 0 3 5z" fill="#c8321e"/>
						<path d="M354 235h4l2-3 2 5 2-2h4" fill="none" stroke="#fff"/>
						<path d="M526 386h3l2-3h6l2 3h3v12h-16zM529 389.500h10M529 392.500h10M529 395.500h10" fill="#292928" stroke="#999"/>
					</svg>
					<div class="status">
						<select class="scale" aria-label="Scale"><option>1:636,331</option></select>
						<i class="sep"></i>
						{#each ['grid', 'table', 'sketch', 'cross', 'north'] as s}
							<button aria-label={s}>{@render icon(s, 13)}</button>
						{/each}
						{@render icon('chev', 9)}
						<i class="sep"></i>
						<span class="coords">79.3617507°W 42.2631462°N</span>
						{@render icon('chev', 9)}
						<span class="features"><i class="sep"></i>{@render icon('zoomSelB', 12)} Selected Features: 0</span>
						<i class="sep"></i>
						{@render icon('clear', 12)}
						<i class="sep"></i>
						<button aria-label="Pause">{@render icon('pause', 13)}</button>
						<i class="sep"></i>
						<button aria-label="Refresh">{@render icon('refresh', 14)}</button>
					</div>
				</div>
			</div>

			<div class="view table-view">
				<div class="doc-tabs">
					<button class="doc blue">{@render icon('table', 13)} <span>Physicians To Patients</span> {@render icon('close', 10)}</button>
					<button class="list" aria-label="Tab list">{@render icon('chev', 9)}</button>
				</div>
				<div class="frame bluetop">
					<div class="toolbar">
						<b>Field:</b>
						<button aria-label="Add field">{@render icon('fieldAdd', 13)}</button>
						<button aria-label="Calculate field">{@render icon('fieldCalc', 13)}</button>
						<i class="sep"></i>
						<b>Selection:</b>
						{#each ['selAttr', 'selZoom', 'swap', 'tableDim', 'tableRed', 'stack'] as s}
							<button aria-label={s}>{@render icon(s, 13)}</button>
						{/each}
						<button class="end" aria-label="Menu">{@render icon('menu', 13)}</button>
					</div>
					<div class="grid-area">
						<div class="scroller">
							<table>
								<colgroup><col class="c-num"><col class="c-id"><col class="c-shape"><col class="c-min"><col class="c-km"><col class="c-len"></colgroup>
								<thead>
									<tr>
										<th class="corner">{@render icon('open', 10)}</th>
										<th class="current">OBJECTID *</th>
										<th>Shape *</th>
										<th>Total Minutes</th>
										<th>Total Kilometers</th>
										<th>Shape_Length</th>
									</tr>
								</thead>
								<tbody>
									{#each rows as r, i}
										<tr>
											<th class:cursor={i === 0}>{i + 1}</th>
											<td class:current={i === 0}>{i + 1}</td>
											<td>Polyline</td>
											{#each r as v}
												<td class="num">{v}</td>
											{/each}
										</tr>
									{/each}
								</tbody>
							</table>
						</div>
						<div class="vbar">{@render icon('up', 8)}<i></i>{@render icon('chev', 8)}</div>
					</div>
					<div class="hbar">{@render icon('left', 8)}{@render icon('right', 8)}</div>
					<div class="table-foot">
						<button class="rows on" aria-label="Show all records">{@render icon('allRows', 14)}</button>
						<button class="rows" aria-label="Show selected records">{@render icon('selRows', 14)}</button>
						<button class="nav" aria-label="First">{@render icon('first', 10)}</button>
						<button class="nav" aria-label="Last">{@render icon('last', 10)}</button>
						<span>0 of 149 selected</span>
						<span class="filters">Filters:</span>
						{#each ['globeDim', 'swapDim', 'funnelGrid', 'sortV'] as f}
							<button aria-label={f}>{@render icon(f, 13)}</button>
						{/each}
						<button class="sign">−</button>
						<input type="range" min="0" max="100" bind:value={zoom} aria-label="Zoom">
						<button class="sign">+</button>
						<select class="percent" aria-label="Zoom percent"><option>100%</option></select>
						<i class="sep"></i>
						<button aria-label="Refresh">{@render icon('refresh', 14)}</button>
					</div>
				</div>
			</div>
		</div>

		<div class="view chart-view">
			<div class="doc-tabs">
				<button class="doc active">{@render icon('hist', 13)} <span>Physicians To Patien...me To Physician</span> {@render icon('close', 10)}</button>
				<button class="list" aria-label="Tab list">{@render icon('chev', 9)}</button>
			</div>
			<div class="frame">
				<div class="toolbar chart-tools">
					<button aria-label="Properties">{@render icon('props', 13)}</button>
					<button class="pair" aria-label="New chart">{@render icon('chartAdd', 13)}{@render icon('caret', 6)}</button>
					<i class="sep"></i>
					<b>Filter:</b>
					<button aria-label="By selection">{@render icon('funnelSel', 14)}</button>
					<button aria-label="By extent">{@render icon('funnelGrid', 14)}</button>
					<i class="sep"></i>
					<button aria-label="Table">{@render icon('tableBlue', 13)}</button>
					<button aria-label="Switch selection">{@render icon('swapSel', 14)}</button>
					<button aria-label="Clear selection">{@render icon('clear', 13)}</button>
					<i class="sep"></i>
					<button aria-label="Rotate">{@render icon('axis', 13)}</button>
					<i class="sep"></i>
					<button class="on" aria-label="Select">{@render icon('select', 14)}</button>
					{@render icon('chev', 8)}
					<button aria-label="Zoom">{@render icon('zoomIn', 13)}</button>
					<button aria-label="Full extent">{@render icon('full', 13)}</button>
					<button class="on end" aria-label="Legend">{@render icon('legend', 13)}</button>
					{@render icon('chev', 8)}
				</div>
				<svg class="chart" viewBox="0 0 458 659" role="img" aria-label="Distribution of Drive Time To Physician">
					<text class="heading" x="229" y="18">Distribution of Drive Time To Physician</text>
					{#each ticks as t}
						<line x1="41" x2="348" y1={by(t) + 0.5} y2={by(t) + 0.5} stroke="#ececec"/>
						<text class="tick" x="32" y={by(t) + 4} text-anchor="end">{t}</text>
					{/each}
					<clipPath id="bins">
						{#each counts as n, i}
							<rect x={bx(i)} y={by(n)} width={bx(i + 1) - bx(i)} height={603 - by(n)}/>
						{/each}
					</clipPath>
					<g clip-path="url(#bins)">
						<rect width="458" height="659" fill="#c5d9ef"/>
						<path d="M41 86h76v230H41zM76 270h43v46H76zM41 368h170v103H106v36H81v-36H54v-25H41zM50 574h160v30H50zM312 550h40v60h-40z" fill="#c2dfeb"/>
						{#each ticks as t}
							<line x1="41" x2="348" y1={by(t) + 0.5} y2={by(t) + 0.5} stroke="#b9d0e4" stroke-opacity=".5"/>
						{/each}
					</g>
					{#each counts as n, i}
						<rect x={bx(i)} y={by(n)} width={bx(i + 1) - bx(i)} height={603 - by(n)} fill="none" stroke="#a9d2e4" stroke-width=".8"/>
						<text class="count" x={bx(i) + 13} y={by(n) - 3}>{n}</text>
					{/each}
					{#each edges as e, i}
						<line x1={bx(i)} x2={bx(i)} y1="603" y2="606" stroke="#999"/>
						<text class="edge" transform="translate({bx(i) - 2} 613) rotate(-45)">{e}</text>
					{/each}
					<line x1="152" x2="152" y1="37" y2="603" stroke="#1560d8" stroke-width="2"/>
					<text class="axis" transform="translate(13 320) rotate(-90)">Count</text>
					<text class="axis" x="197" y="657">Total Minutes</text>
					<line x1="365" x2="374" y1="341.500" y2="341.500" stroke="#3b86e8" stroke-width="1.500"/>
					<text class="tick" x="377" y="346">Mean : 24.60981</text>
				</svg>
			</div>
		</div>

		<aside class="pane catalog">
			{@render paneTitle('Catalog')}
			<nav class="cat-tabs">
				{#each ['Project', 'Portal', 'Computer', 'Favorites'] as t}
					<button class:active={t === 'Project'}>{t}</button>
				{/each}
				<button class="end" aria-label="Menu">{@render icon('menu', 13)}</button>
			</nav>
			<div class="search-row">
				{@render icon('backCircle', 15)}
				<label class="search">
					<i class="up">{@render icon('folderUp', 12)}</i>
					<input type="text" placeholder="Search Project" aria-label="Search Project">
					{@render icon('search', 11)}
					{@render icon('chev', 8)}
				</label>
			</div>
			<ul class="tree">
				{#each catalog as c}
					<li style="padding-left: {c.pad}px">
						<span class="twist">{#if c.open !== undefined}{@render icon(c.open ? 'open' : 'shut', 8)}{/if}</span>
						<span class="item" class:selected={c.selected} class:long={c.long}>{@render icon(c.icon, 14)}<span>{c.label}</span></span>
					</li>
				{/each}
			</ul>
			<div class="cat-scroll">{@render icon('left', 9)}<i></i>{@render icon('right', 9)}</div>
		</aside>
	</main>
</div>

<style>
	:global(body) {
		margin: 0;
		background: #242424;
	}

	.app {
		display: flex;
		flex-direction: column;
		height: 100vh;
		min-height: 720px;
		box-sizing: border-box;
		border-top: 1px solid #f4f4f4;
		font: 10px/12px Lato, "Open Sans", sans-serif;
		color: #dadada;
		overflow: hidden;
	}
	.app * {
		box-sizing: border-box;
	}
	.icon {
		flex: none;
		display: block;
	}
	button {
		display: flex;
		align-items: center;
		justify-content: center;
		padding: 0;
		border: 0;
		background: none;
		color: inherit;
		font: inherit;
		white-space: nowrap;
		cursor: pointer;
	}
	input, select {
		font: inherit;
		color: inherit;
		border: 0;
		outline: 0;
		background: none;
		min-width: 0;
	}
	select {
		appearance: none;
		background: #1f1f1f linear-gradient(#c8c8c8, #c8c8c8) no-repeat right 4px center / 4px 2px;
	}
	input::placeholder {
		color: #c0c0c0;
		font-style: italic;
		opacity: 1;
	}
	.sep {
		flex: none;
		width: 1px;
		height: 12px;
		background: #777;
	}
	.on {
		background: #555960;
	}
	.end {
		margin-left: auto;
	}

	/* title bar */
	.titlebar {
		display: flex;
		align-items: center;
		height: 21px;
		background: #323232;
	}
	.quick {
		display: flex;
		flex: 1;
	}
	.quick button {
		width: 22px;
		height: 20px;
	}
	.quick .on {
		width: 18px;
		margin: 0 2px;
	}
	.quick .drop {
		width: 9px;
	}
	.command {
		display: flex;
		align-items: center;
		gap: 4px;
		width: 145px;
		height: 19px;
		margin-left: 9px;
		padding: 0 5px;
		border: 1px solid #505050;
	}
	.command input {
		flex: 1;
		padding: 0;
	}
	.command input::placeholder {
		color: #8f8f8f;
	}
	.account {
		display: flex;
		flex: 1;
		justify-content: flex-end;
		align-items: center;
	}
	.account button {
		position: relative;
		width: 35px;
		height: 20px;
	}
	.account .avatar, .account .avatar + button {
		width: 20px;
		border-radius: 10px;
		background: #505050;
		margin-left: 7px;
	}
	.account .avatar + button {
		background: none;
		margin-right: 3px;
	}
	.help {
		color: #a5a5a5;
		font-size: 12px;
	}
	.dot {
		position: absolute;
		top: 1px;
		right: 0;
		width: 5px;
		height: 5px;
		border-radius: 3px;
		background: #e08b1e;
	}

	/* ribbon tabs */
	.tabs {
		display: flex;
		height: 23px;
		background: #323232;
		font-size: 11px;
		line-height: 15px;
		color: #dcdcdc;
	}
	.tabs > button {
		padding: 0 13px 0 12px;
	}
	.tabs .active span {
		font-weight: 700;
		color: #fff;
		border-bottom: 2px solid #1aa0f2;
	}
	.context {
		display: flex;
		margin: 2px 0 2px 14px;
		background: #252525;
		border-radius: 2px;
	}
	.context + .context {
		margin-left: 18px;
	}
	.context button {
		padding: 0 13px;
	}

	.ribbon {
		display: flex;
		height: 76px;
		background: #323232;
		color: #dadada;
	}
	.ribbon section {
		display: flex;
		flex-direction: column;
		padding: 1px 3px 0 2px;
		border-right: 1px solid #424242;
	}
	.ribbon section:nth-child(3) {
		padding: 1px 5px 0 6px;
	}
	.ribbon section:nth-child(4) {
		padding-left: 6px;
	}
	.tools {
		display: flex;
		flex: 1;
	}
	.large {
		flex-direction: column;
		justify-content: flex-start;
		height: 58px;
		padding-top: 3px;
		line-height: 11px;
	}
	.large svg {
		margin-bottom: 2px;
	}
	.second {
		display: flex;
		align-items: center;
		justify-content: center;
		height: 12px;
	}
	.second :global(svg) {
		margin: 0;
	}
	.w30 { width: 30px; }
	.w32 { width: 32px; }
	.w36 { width: 36px; }
	.w40 { width: 40px; }
	.w44 { width: 48px; }
	.w50 { width: 51px; }
	.w64 { width: 64px; }
	.mini {
		display: grid;
		grid-template-columns: 16px 16px;
		grid-auto-rows: 18px;
		gap: 1px;
		padding-top: 3px;
	}
	.stack {
		display: flex;
		flex-direction: column;
		align-items: flex-start;
		padding-left: 2px;
	}
	.stack button {
		gap: 4px;
		height: 19px;
	}
	.stack button:disabled {
		color: #777;
	}
	.ribbon footer {
		display: flex;
		justify-content: center;
		position: relative;
		height: 14px;
		color: #a8a8a8;
	}
	.ribbon footer button {
		position: absolute;
		right: 0;
		top: 2px;
	}
	.collapse {
		margin: auto 2px 1px auto;
	}

	/* panes */
	main {
		flex: 1;
		display: grid;
		grid-template-columns: 258px minmax(0, 551fr) minmax(0, 461fr) 258px;
		grid-template-rows: minmax(0, 1fr);
		gap: 5px;
		padding: 5px 2px 3px;
		min-height: 0;
	}
	.pane {
		display: flex;
		flex-direction: column;
		min-width: 0;
		border: 1px solid #50555a;
		border-radius: 2px;
		background: #323232;
	}
	.pane-title {
		display: flex;
		align-items: center;
		gap: 5px;
		height: 25px;
		padding: 0 4px 0 5px;
	}
	h2 {
		flex: 1;
		margin: 0;
		font-size: 13px;
		font-weight: 400;
	}
	.search-row {
		display: flex;
		align-items: center;
		gap: 4px;
		height: 22px;
		padding: 0 2px;
	}
	.search {
		flex: 1;
		display: flex;
		align-items: center;
		gap: 8px;
		height: 20px;
		padding-right: 4px;
		border: 1px solid #686868;
		background: #222;
	}
	.search input {
		flex: 1;
		padding: 0 0 0 4px;
	}
	.up {
		display: flex;
		align-items: center;
		height: 100%;
		border-right: 1px solid #686868;
		margin-right: -8px;
	}
	.views {
		display: flex;
		width: 182px;
		margin: 3px 0 0 12px;
		border-bottom: 1px solid #505050;
	}
	.views button {
		width: 26px;
		height: 28px;
		border-bottom: 2px solid transparent;
	}
	.views .active {
		border-color: #1a8fef;
	}
	h3 {
		margin: 11px 0 5px 12px;
		font-size: 11px;
		line-height: 14px;
		font-weight: 700;
	}
	.tree {
		display: flex;
		flex-direction: column;
		flex: 1;
		margin: 0;
		padding: 0 1px 20px 0;
		list-style: none;
		min-height: 0;
	}
	.tree li {
		display: flex;
		flex: 1 1 19px;
	}
	.tree li.legend {
		flex: 0 0 18px;
	}
	.twist {
		flex: none;
		display: flex;
		align-items: center;
		justify-content: center;
		width: 10px;
	}
	.item {
		flex: 1;
		display: flex;
		align-items: center;
		gap: 4px;
		padding-left: 1px;
		min-width: 0;
		white-space: nowrap;
	}
	.item.wide {
		gap: 7px;
	}
	.item.deep {
		padding-left: 5px;
	}
	.item.selected {
		background: #2c5378;
		border: 1px solid #3a648b;
		padding-left: 0;
	}
	.item.bold {
		font-weight: 700;
	}
	.item input {
		appearance: none;
		flex: none;
		display: grid;
		place-items: center;
		width: 12px;
		height: 12px;
		margin: 0;
		border: 1px solid #777;
		border-radius: 1px;
		background: #212121;
	}
	.item input:checked::before {
		content: '';
		width: 4px;
		height: 7px;
		margin-top: -2px;
		border: solid #e6e6e6;
		border-width: 0 2px 2px 0;
		transform: rotate(45deg);
	}
	.swatch {
		width: 17px;
		height: 13px;
		border: 1px solid #41b39a;
		background: #4b70a4;
	}
	.swatch.green {
		background: #6b9a54;
		border-color: #3f8a1e;
	}
	.swatch.grey {
		background: #8488a6;
		border-color: #1cb0e0;
	}
	.swatch.line {
		width: 14px;
		height: 2px;
		border: 0;
		background: #e0506e;
	}

	/* document views */
	.center {
		display: grid;
		grid-template-rows: minmax(0, 446fr) minmax(0, 256fr);
		gap: 5px;
		min-width: 0;
	}
	.view {
		display: flex;
		flex-direction: column;
		min-width: 0;
		min-height: 0;
	}
	.doc-tabs {
		display: flex;
		flex: none;
		height: 19px;
	}
	.doc {
		gap: 4px;
		padding: 0 5px;
		border-radius: 2px 2px 0 0;
		color: #e2e2e2;
	}
	.doc span {
		padding-right: 3px;
	}
	.doc.active {
		background: #54585f;
	}
	.doc.blue {
		background: #0071c1;
		color: #fff;
	}
	.doc-tabs .list {
		margin: 0 3px 0 auto;
	}
	.frame {
		flex: 1;
		display: flex;
		flex-direction: column;
		min-height: 0;
		border: 1px solid #54585f;
		border-top-width: 2px;
		background: #323232;
	}
	.frame.bluetop {
		border-top-color: #0071c1;
	}
	.map {
		flex: 1;
		display: block;
		width: 100%;
		min-height: 0;
	}
	.place text {
		font-size: 8px;
		fill: #706a80;
		font-family: "Liberation Sans", sans-serif;
	}
	.place .park {
		fill: #85845a;
	}
	.place .town {
		fill: #c9c9c9;
	}
	.shield {
		font: bold 7px "Liberation Sans", sans-serif;
		fill: #e0e0e0;
		text-anchor: middle;
	}
	.status {
		display: flex;
		flex: none;
		align-items: center;
		justify-content: space-between;
		height: 20px;
		padding: 0 3px;
		background: #303030;
	}
	.scale {
		width: 81px;
		height: 17px;
		padding: 0 4px;
		border: 1px solid #555;
	}
	.coords {
		padding-left: 4px;
	}
	.features {
		display: flex;
		align-items: center;
		gap: 5px;
		color: #8a8a8a;
	}
	.toolbar {
		display: flex;
		flex: none;
		align-items: center;
		gap: 6px;
		height: 25px;
		padding: 0 5px;
		background: #35393d;
		border-bottom: 1px solid #4c5156;
	}
	.toolbar button {
		min-width: 15px;
		height: 18px;
	}
	.toolbar b {
		font-weight: 700;
	}
	.grid-area {
		flex: 1;
		display: flex;
		min-height: 0;
		background: #242424;
	}
	.scroller {
		flex: 1;
		overflow: hidden;
	}
	table {
		width: 319px;
		table-layout: fixed;
		border-collapse: collapse;
		font: 9px/12px "Open Sans", sans-serif;
	}
	.c-num { width: 19px; }
	.c-id { width: 56px; }
	.c-shape { width: 39px; }
	.c-min { width: 64px; }
	.c-km { width: 75px; }
	.c-len { width: 66px; }
	th, td {
		height: 20px;
		padding: 0 2px;
		border: 1px solid #5b5b5b;
		text-align: left;
		white-space: nowrap;
		overflow: hidden;
	}
	thead th {
		background: #444;
		text-align: center;
		font-weight: 600;
	}
	thead .corner {
		padding: 8px 0 0 6px;
		background: #242424;
	}
	thead .current {
		background: #1f4a6b;
		border-bottom: 2px solid #2c8ce8;
	}
	tbody th {
		background: #484848;
		font-weight: 400;
		padding-left: 4px;
		color: #aaa;
	}
	tbody tr:nth-child(even) td {
		background: #444;
	}
	td.current {
		background: #1c4766;
	}
	th.cursor {
		border-right: 2px solid #2c8ce8;
	}
	td.num {
		text-align: right;
	}
	.vbar {
		display: flex;
		flex-direction: column;
		align-items: center;
		justify-content: space-between;
		width: 14px;
		padding: 2px 0 4px;
	}
	.vbar i {
		width: 8px;
		height: 18px;
		margin: 4px 0 auto;
		border-radius: 4px;
		background: #777;
	}
	.hbar {
		display: flex;
		flex: none;
		justify-content: space-between;
		height: 15px;
		padding: 3px 18px 0 3px;
		background: #242424;
		border-bottom: 1px solid #4a4a4a;
		opacity: .6;
	}
	.table-foot {
		display: flex;
		flex: none;
		align-items: center;
		gap: 5px;
		height: 23px;
		padding-right: 3px;
	}
	.rows {
		width: 25px;
		height: 19px;
		border: 1px solid transparent;
	}
	.rows.on {
		border-color: #2d72a8;
	}
	.nav {
		width: 14px;
	}
	.filters {
		margin-left: auto;
	}
	.sign {
		width: 10px;
		font-size: 12px;
	}
	input[type="range"] {
		appearance: none;
		width: 82px;
		height: 12px;
		margin: 0;
		background: linear-gradient(#808080, #808080) no-repeat center / 100% 1px;
	}
	input[type="range"]::-webkit-slider-thumb {
		appearance: none;
		width: 3px;
		height: 9px;
		background: #bdbdbd;
	}
	.percent {
		width: 44px;
		height: 17px;
		padding: 0 2px;
	}

	/* chart */
	.chart-tools {
		height: 24px;
	}
	.chart-tools .pair {
		width: 18px;
	}
	.chart-tools .on {
		width: 17px;
	}
	.chart {
		flex: 1;
		width: 100%;
		min-height: 0;
		background: #fff;
	}
	.chart text {
		fill: #4c4c4c;
		font-family: "Open Sans", sans-serif;
	}
	.chart .heading {
		font-size: 16px;
		text-anchor: middle;
	}
	.chart .tick {
		font-size: 10px;
	}
	.chart .count {
		font-size: 9px;
		text-anchor: middle;
	}
	.chart .edge {
		font-size: 10px;
		text-anchor: end;
	}
	.chart .axis {
		font-size: 12px;
		text-anchor: middle;
	}

	/* catalog */
	.cat-tabs {
		display: flex;
		gap: 10px;
		height: 22px;
		padding: 0 5px 0 4px;
	}
	.cat-tabs button {
		height: 20px;
		border-bottom: 2px solid transparent;
	}
	.cat-tabs .active {
		color: #fff;
		border-color: #1a8fef;
	}
	.catalog .search-row {
		height: 26px;
		padding-top: 2px;
	}
	.catalog .tree {
		flex: 0 0 39%;
		padding: 3px 3px 1px 0;
	}
	.catalog .item {
		padding-left: 4px;
		gap: 6px;
	}
	.catalog .item.long {
		font-size: 9px;
	}
	.catalog .item.selected {
		background: #5c5c5c;
		border-color: #707070;
		padding-left: 3px;
	}
	.cat-scroll {
		display: flex;
		align-items: center;
		justify-content: space-between;
		margin-top: auto;
		height: 14px;
		padding: 0 4px;
	}
	.cat-scroll i {
		width: 142px;
		height: 7px;
		margin: 0 auto 0 2px;
		border-radius: 4px;
		background: #777;
	}
</style>
